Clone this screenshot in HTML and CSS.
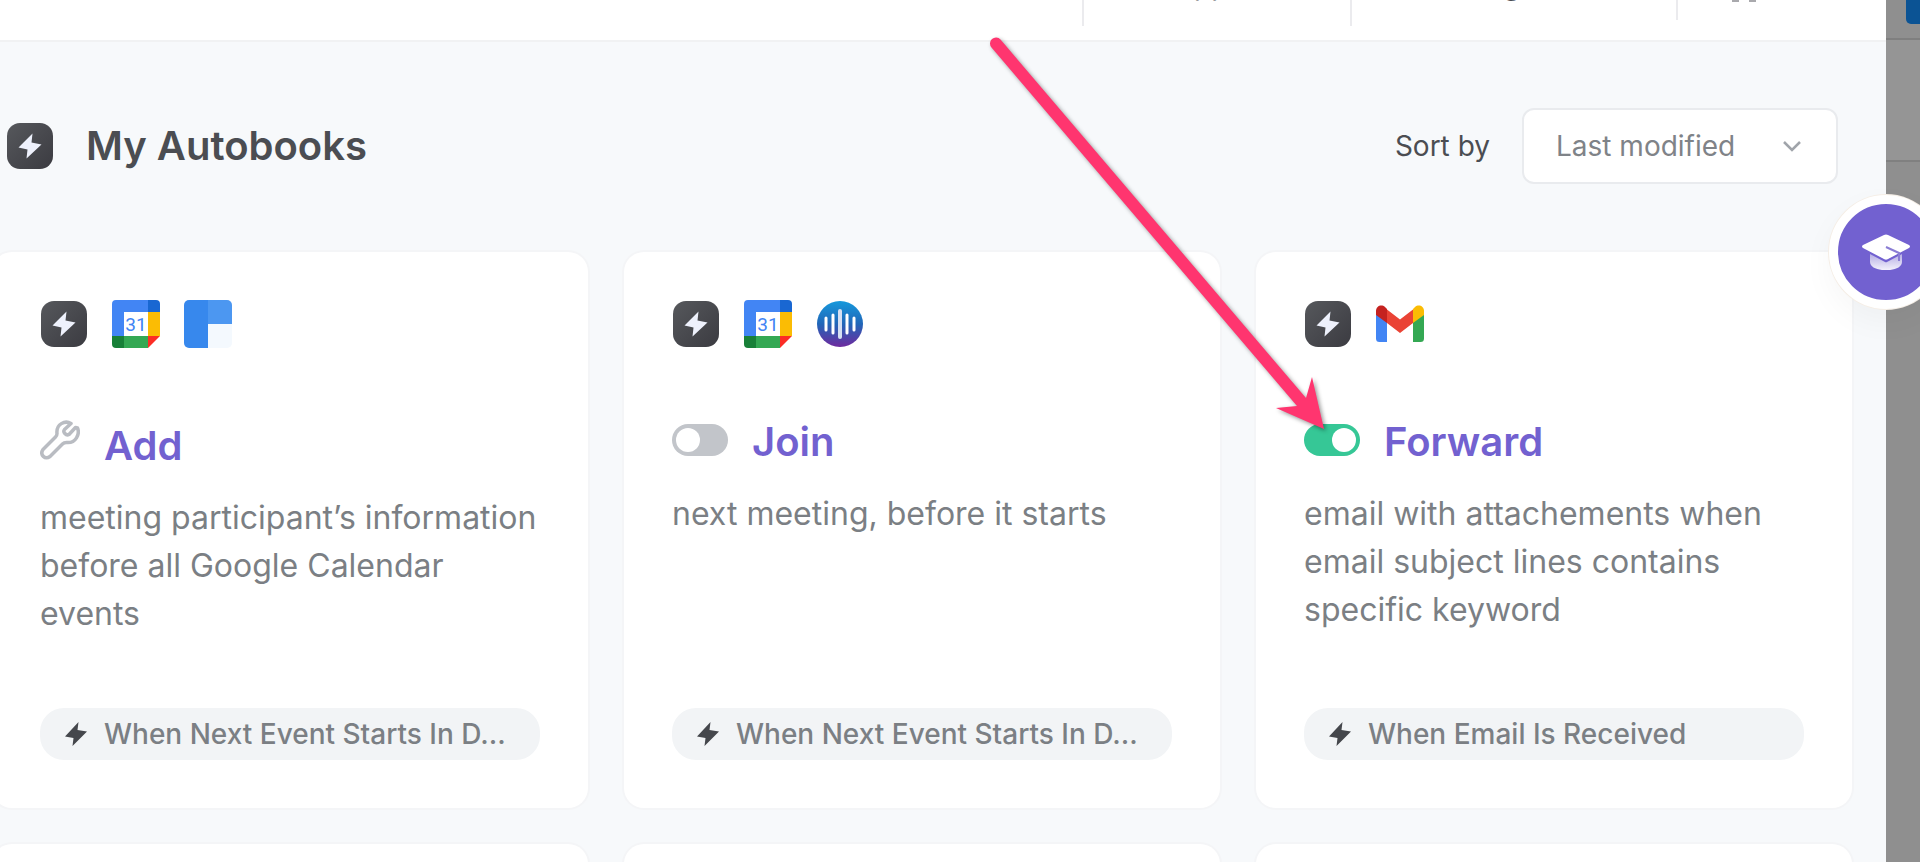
FILE: index.html
```
<!DOCTYPE html>
<html lang="en">
<head>
  <meta charset="utf-8">
  <title>My Autobooks</title>
  <link rel="stylesheet" href="styles.css">
</head>
<body>
  <!-- shared icons -->
  <svg class="sprite" width="0" height="0" aria-hidden="true">
    <defs>
      <linearGradient id="darkTile" x1="0" y1="0" x2="1" y2="1">
        <stop offset="0" stop-color="#56585c"/>
        <stop offset="1" stop-color="#3b3b41"/>
      </linearGradient>
      <linearGradient id="voice" x1="0" y1="0" x2="0" y2="1">
        <stop offset="0" stop-color="#1699dc"/>
        <stop offset="0.5" stop-color="#2166b8"/>
        <stop offset="1" stop-color="#6e2a9e"/>
      </linearGradient>
      <linearGradient id="capBase" x1="0" y1="0" x2="0" y2="1">
        <stop offset="0.2" stop-color="#b5ade4"/>
        <stop offset="1" stop-color="#f4f2fc"/>
      </linearGradient>
    </defs>
    <symbol id="icon-autobook" viewBox="0 0 48 48">
      <rect x="1" y="1" width="46" height="46" rx="13" fill="url(#darkTile)"/>
      <path d="M26.500 11.500L12.500 25.500L21.500 27.500L20.500 36.500L35.500 22.500L25.500 20.500Z" fill="#eef1fc"/>
    </symbol>
    <symbol id="icon-calendar" viewBox="0 0 48 48">
      <path d="M4 0H36V12H12V36H0V4a4 4 0 0 1 4-4Z" fill="#4285f4"/>
      <path d="M36 0h8a4 4 0 0 1 4 4v8H36Z" fill="#1967d2"/>
      <path d="M36 12h12v24H36Z" fill="#fbbc04"/>
      <path d="M12 36h24v12H12Z" fill="#34a853"/>
      <path d="M0 36h12v12H4a4 4 0 0 1-4-4Z" fill="#188038"/>
      <path d="M36 36h12L36 48Z" fill="#fc2d25"/>
      <path d="M12 12h24v24H12Z" fill="#fff"/>
      <text x="24" y="31" text-anchor="middle" class="day">31</text>
    </symbol>
    <symbol id="icon-tiles" viewBox="0 0 48 48">
      <path d="M5 0H24V48H5a5 5 0 0 1-5-5V5a5 5 0 0 1 5-5Z" fill="#3788ed"/>
      <path d="M24 0H43a5 5 0 0 1 5 5V24H24Z" fill="#4c97f1"/>
      <path d="M24 24H48V43a5 5 0 0 1-5 5H24Z" fill="#f4f9fe"/>
    </symbol>
    <symbol id="icon-voice" viewBox="0 0 48 48">
      <circle cx="24" cy="24" r="23" fill="url(#voice)"/>
      <g stroke="#fff" stroke-width="3" stroke-linecap="round">
        <path d="M10 18v12M17 15v18M31 15v18M38 18v12"/>
        <path d="M24 11v26" stroke-width="4" stroke="#d5dff2"/>
      </g>
    </symbol>
    <symbol id="icon-gmail" viewBox="0 0 48 48">
      <path d="M0 14V38.500a3.500 3.500 0 0 0 3.500 3.500H11V20Z" fill="#4285f4"/>
      <path d="M48 14V38.500a3.500 3.500 0 0 1-3.500 3.500H37V20Z" fill="#34a853"/>
      <path d="M11 9.500L24 19.500L37 9.500V23L24 33L11 23Z" fill="#ea4335"/>
      <path d="M0 11C0 6 5.500 4 9 7L11 9V23L0 15Z" fill="#c5221f"/>
      <path d="M48 11C48 6 42.500 4 39 7L37 9V23L48 15Z" fill="#fbbc04"/>
    </symbol>
    <symbol id="icon-bolt" viewBox="0 0 24 24">
      <path d="M14.500 0L1 14.500L9.500 16L8.500 24L23 9.500L13.500 8Z" fill="#45474c"/>
    </symbol>
  </svg>

  <div class="panel">
    <nav class="topbar">
      <a class="nav-item nav-apps" href="#">Apps</a>
      <a class="nav-item nav-categories" href="#">Categories</a>
      <a class="nav-item nav-grid" href="#" aria-label="Grid view"><span></span><span></span></a>
    </nav>

    <main>
      <header class="page-header">
        <svg class="icon"><use href="#icon-autobook"/></svg>
        <h1>My Autobooks</h1>
        <label class="sort-label" for="sort">Sort by</label>
        <div class="select-wrap">
          <select id="sort">
            <option>Last modified</option>
            <option>Name</option>
          </select>
          <svg class="chevron" viewBox="0 0 20 12"><path d="M2 1l8 8 8-8" fill="none" stroke="#a0a4aa" stroke-width="2.500"/></svg>
        </div>
      </header>

      <section class="cards">
        <article class="card">
          <div class="apps">
            <svg class="icon"><use href="#icon-autobook"/></svg>
            <svg class="icon"><use href="#icon-calendar"/></svg>
            <svg class="icon"><use href="#icon-tiles"/></svg>
          </div>
          <div class="card-title setup">
            <svg class="wrench" viewBox="0 0 40 40"><path d="M35.500 7.500L29 14.500C26 16 22.500 12 24.500 9.500L31 3.500C25 0 16 4 17 13.500C17 15 16.500 16 15.500 17L3 29.500C-0.500 35 5 40 10 36.500L22.500 24C23.500 23 25 22.500 26.500 22.500C36 23.500 40 14 37.500 8Z" fill="none" stroke="#b9bcc2" stroke-width="3.500" stroke-linejoin="round"/></svg>
            <h2>Add</h2>
          </div>
          <p>meeting participant’s information before all Google Calendar events</p>
          <div class="trigger">
            <svg><use href="#icon-bolt"/></svg>
            <span>When Next Event Starts In D...</span>
          </div>
        </article>

        <article class="card">
          <div class="apps">
            <svg class="icon"><use href="#icon-autobook"/></svg>
            <svg class="icon"><use href="#icon-calendar"/></svg>
            <svg class="icon"><use href="#icon-voice"/></svg>
          </div>
          <div class="card-title">
            <input class="toggle" type="checkbox" id="join">
            <h2><label for="join">Join</label></h2>
          </div>
          <p>next meeting, before it starts</p>
          <div class="trigger">
            <svg><use href="#icon-bolt"/></svg>
            <span>When Next Event Starts In D...</span>
          </div>
        </article>

        <article class="card">
          <div class="apps">
            <svg class="icon"><use href="#icon-autobook"/></svg>
            <svg class="icon"><use href="#icon-gmail"/></svg>
          </div>
          <div class="card-title">
            <input class="toggle" type="checkbox" id="forward" checked>
            <h2><label for="forward">Forward</label></h2>
          </div>
          <p>email with attachements when email subject lines contains specific keyword</p>
          <div class="trigger">
            <svg><use href="#icon-bolt"/></svg>
            <span>When Email Is Received</span>
          </div>
        </article>

        <article class="card"></article>
        <article class="card"></article>
        <article class="card"></article>
      </section>
    </main>
  </div>

  <aside class="backdrop">
    <div class="backdrop-bar"><div class="backdrop-button"></div></div>
    <div class="backdrop-row"></div>
  </aside>

  <button class="learn" aria-label="Tutorials">
    <svg viewBox="0 0 48 36">
      <path d="M8 16V28C8 39 40 39 40 28V16Z" fill="url(#capBase)"/>
      <path d="M24 25.500L40 17V20L25 28Q24 28.500 23 28L8 20V17Z" fill="#7261d0"/>
      <path d="M22 1Q24 0 26 1L47 11Q49 12.500 47 14L26 25Q24 26 22 25L1 14Q-1 12.500 1 11Z" fill="#fff"/>
      <path d="M24 13L37 19V27" fill="none" stroke="#8a7dd4" stroke-width="2"/>
    </svg>
  </button>

  <!-- arrow pointing at the Forward switch -->
  <svg class="arrow" width="350" height="410" viewBox="0 0 350 410">
    <path d="M11.500 12.500A6 6 0 0 1 20.500 4.500L326 363L332 342L344 394L296 373L317 371Z" fill="#ff356f"/>
  </svg>
</body>
</html>
```
FILE: styles.css
```
* {
  box-sizing: border-box;
}

body {
  margin: 0;
  display: flex;
  height: 100vh;
  overflow: hidden;
  position: relative;
  font-family: Inter, "Liberation Sans", sans-serif;
  color: #4b4d52;
}

h1, h2, p {
  margin: 0;
}

.sprite {
  position: absolute;
}

.day {
  font: 400 19px Roboto, sans-serif;
  fill: #4285f4;
}

.panel {
  flex: 1;
  min-width: 0;
  overflow: hidden;
  background: #f7f9fb;
}

/* Top bar, scrolled mostly out of view */
.topbar {
  display: flex;
  justify-content: flex-end;
  height: 42px;
  background: #fff;
  border-bottom: 2px solid #f1f2f3;
}

.nav-item {
  height: 26px;
  border-left: 2px solid #ebebee;
  font-size: 28px;
  line-height: 22px;
  color: #4b4d52;
  text-align: center;
  text-decoration: none;
}

.nav-apps,
.nav-categories {
  margin-top: -26px;
  height: 52px;
}

.nav-apps {
  width: 268px;
  padding-right: 16px;
}

.nav-categories {
  width: 326px;
}

.nav-grid {
  display: flex;
  gap: 10px;
  width: 210px;
  height: 20px;
  padding-left: 54px;
}

.nav-grid span {
  width: 7px;
  height: 2px;
  background: #a9a9ad;
}

/* Page header */
.page-header {
  display: flex;
  align-items: center;
  padding: 66px 48px 68px 6px;
}

.icon {
  width: 48px;
  height: 48px;
  flex: none;
}

h1 {
  margin-left: 32px;
  font-size: 40px;
  font-weight: 600;
  line-height: 48px;
}

.sort-label {
  margin-left: auto;
  margin-right: 32px;
  font-size: 28px;
  line-height: 36px;
}

.select-wrap {
  position: relative;
}

.select-wrap select {
  appearance: none;
  width: 316px;
  height: 76px;
  padding: 0 32px;
  border: 2px solid #e9ebee;
  border-radius: 12px;
  background: #fff;
  font: inherit;
  font-size: 28px;
  color: #7f8388;
}

.chevron {
  position: absolute;
  right: 36px;
  top: 33px;
  width: 20px;
  height: 12px;
  pointer-events: none;
}

/* Cards */
.cards {
  display: grid;
  grid-template-columns: repeat(3, 1fr);
  gap: 36px;
  margin: 0 34px 0 -8px;
}

.card {
  display: flex;
  flex-direction: column;
  min-width: 0;
  min-height: 556px;
  padding: 48px;
  border-radius: 20px;
  background: #fff;
  box-shadow: 0 0 0 2px #f4f5f7;
}

.apps {
  display: flex;
  gap: 24px;
  margin-bottom: 68px;
}

.card-title {
  display: flex;
  align-items: flex-start;
  gap: 24px;
  margin-bottom: 22px;
}

h2 {
  font-size: 40px;
  font-weight: 600;
  line-height: 52px;
  color: #7261d0;
}

.setup h2 {
  padding-top: 4px;
}

.wrench {
  width: 40px;
  height: 40px;
  margin-top: 4px;
}

.toggle {
  appearance: none;
  display: flex;
  width: 56px;
  height: 32px;
  margin: 8px 0 0;
  padding: 4px;
  border-radius: 16px;
  background: #c2c5ca;
}

.toggle::before {
  content: "";
  width: 24px;
  height: 24px;
  border-radius: 50%;
  background: #fff;
}

.toggle:checked {
  justify-content: flex-end;
  background: #36c796;
}

.card p {
  font-size: 32px;
  line-height: 48px;
  color: #7b7f84;
}

.trigger {
  display: flex;
  align-items: center;
  gap: 16px;
  height: 52px;
  margin-top: auto;
  padding: 0 24px;
  border-radius: 24px;
  background: #f2f4f6;
  font-size: 28px;
  font-weight: 500;
  color: #7b7f84;
}

.trigger svg {
  flex: none;
  width: 24px;
  height: 24px;
}

.trigger span {
  overflow: hidden;
  white-space: nowrap;
  text-overflow: ellipsis;
}

/* Dimmed page behind the panel */
.backdrop {
  width: 34px;
  background: #8f8f8f;
}

.backdrop-bar {
  height: 40px;
  padding-left: 20px;
  border-bottom: 2px solid #7f7f7f;
}

.backdrop-button {
  height: 24px;
  border-radius: 0 0 0 5px;
  background: #0b5394;
}

.backdrop-row {
  height: 122px;
  border-bottom: 2px solid #808080;
  background: #959595;
}

/* Floating button on the panel edge */
.learn {
  position: absolute;
  top: 195px;
  right: -23px;
  display: flex;
  align-items: center;
  justify-content: center;
  width: 114px;
  height: 114px;
  padding: 0;
  border: 9px solid #fff;
  border-radius: 50%;
  background: #7261d0;
  box-shadow: 0 0 0 1px #f5eee6, 0 12px 32px rgba(0, 0, 0, 0.04);
}

.learn svg {
  flex: none;
  width: 48px;
  height: 36px;
}

.arrow {
  position: absolute;
  top: 35px;
  left: 980px;
  filter: drop-shadow(2px 2px 2px rgba(0, 0, 0, 0.4));
  pointer-events: none;
}
```
